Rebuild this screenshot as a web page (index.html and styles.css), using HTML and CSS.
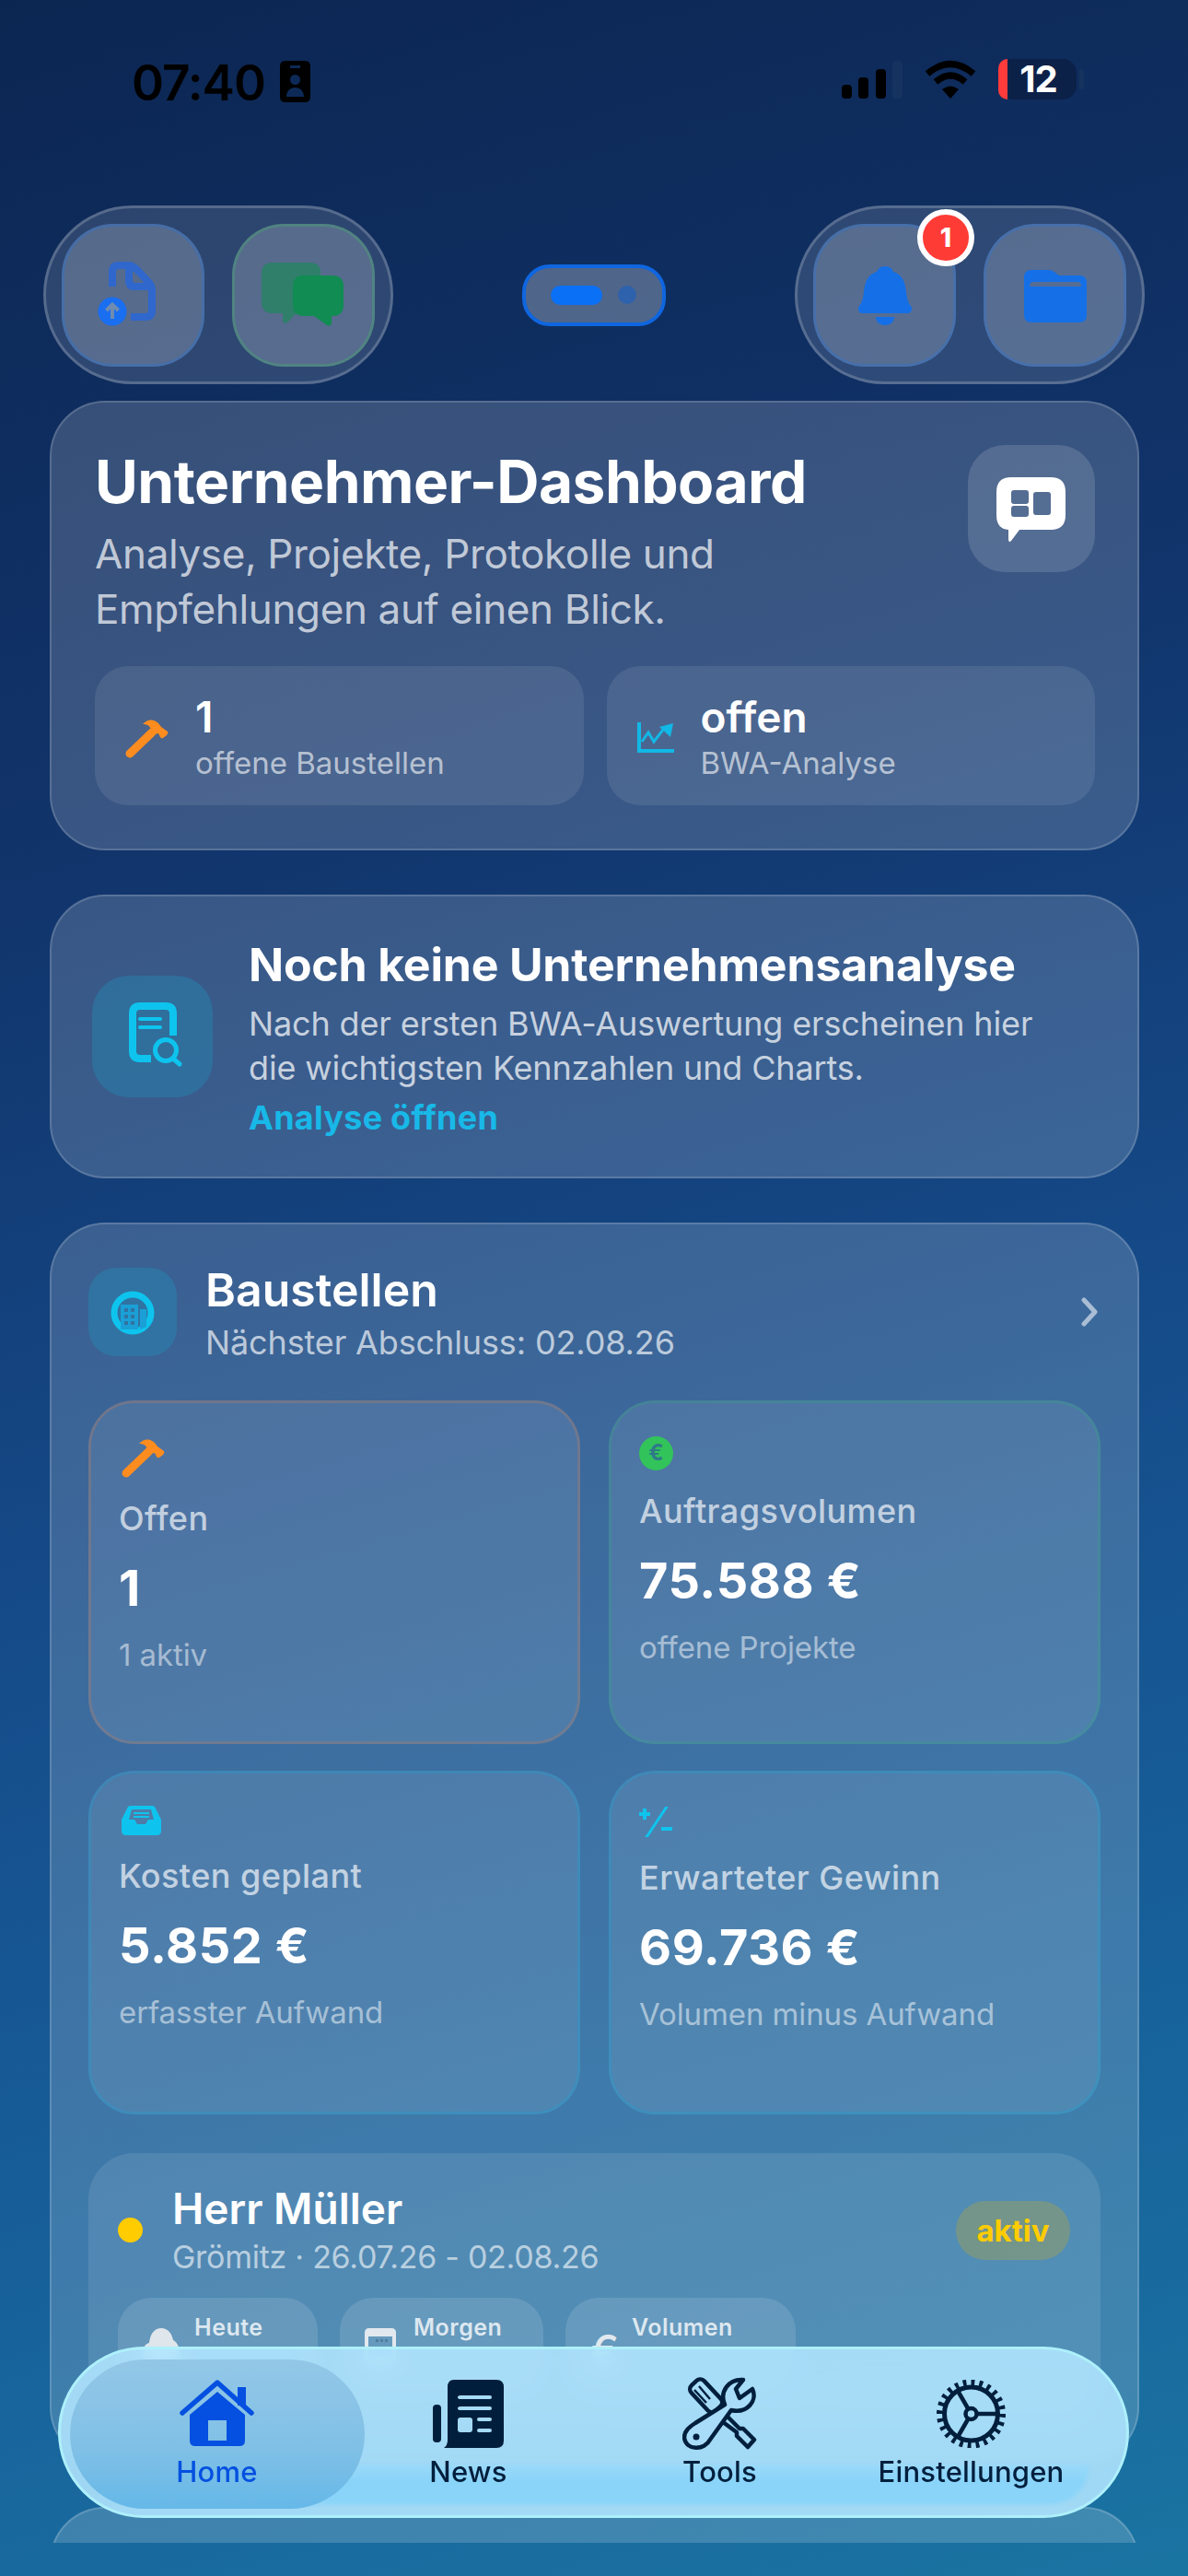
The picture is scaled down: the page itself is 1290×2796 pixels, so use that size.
FILE: index.html
```html
<!DOCTYPE html>
<html lang="de">
<head>
<meta charset="utf-8">
<title>Unternehmer-Dashboard</title>
<link rel="stylesheet" href="styles.css">
</head>
<body>
<div class="screen">
  <header class="status">
    <div class="status-left">
      <span class="time">07:40</span>
      <svg class="contact" viewBox="0 0 33 45"><path fill-rule="evenodd" d="M6 0H27Q33 0 33 6V39Q33 45 27 45H6Q0 45 0 39V6Q0 0 6 0ZM11 5V8H22V5ZM16.500 15A5.500 5.500 0 1 0 16.500 26A5.500 5.500 0 1 0 16.500 15ZM7 39H26C26 33 22 29 16.500 29S7 33 7 39Z"/></svg>
    </div>
    <div class="status-right">
      <div class="signal"><i class="bar b1"></i><i class="bar b2"></i><i class="bar b3"></i><i class="bar b4"></i></div>
      <svg class="wifi" viewBox="0 0 58 42"><path d="M4 15Q29 -6 54 15M13 24Q29 10 45 24" fill="none" stroke="#000" stroke-width="7"/><path d="M20 32Q29 25 38 32L29 42Z"/></svg>
      <div class="battery"><span class="battery-low"></span><span class="battery-num">12</span></div>
      <span class="battery-nub"></span>
    </div>
  </header>

  <nav class="topbar">
    <div class="capsule">
      <button class="round blue">
        <svg viewBox="0 0 155 155"><path d="M55 68V52Q55 45 62 45H72Q77 45 81 49L94 63Q98 67 98 72V94Q98 101 91 101H75M73 47V62Q73 68 79 68H96" fill="none" stroke="#2f67cc" stroke-width="8"/><circle cx="55" cy="95" r="15.500" fill="#1a6ef0"/><path d="M55 103V89M48.500 94L55 87.500L61.500 94" fill="none" stroke="#6f8cb0" stroke-width="4"/></svg>
      </button>
      <button class="round green">
        <svg viewBox="0 0 155 155"><path d="M44 42H84Q96 42 96 52V60H76Q66 60 66 70V88Q66 94 70 97L60 107Q55 110 55 103V97H44Q32 97 32 85V54Q32 42 44 42Z" fill="#2f7f6b"/><path d="M78 56H109Q121 56 121 68V88Q121 100 109 100H108V107Q108 112 103 110L89 100H78Q66 100 66 88V68Q66 56 78 56Z" fill="#118c52"/></svg>
      </button>
    </div>
    <div class="toggle"><span class="toggle-pill"></span><span class="toggle-dot"></span></div>
    <div class="capsule">
      <button class="round blue">
        <svg viewBox="0 0 155 155" fill="#1570e8"><path d="M78 46c5 0 8 3 9 6c9 3 13 10 14 22c1 9 3 13 5 15c2 2 1 8-3 8H53c-4 0-5-6-3-8c2-2 4-6 5-15c1-12 5-19 14-22c1-3 4-6 9-6z"/><path d="M68 101H88c0 5-4 9-10 9s-10-4-10-9z"/></svg>
      </button>
      <span class="badge">1</span>
      <button class="round blue">
        <svg viewBox="0 0 155 155" fill="#1570e8"><path fill-rule="evenodd" d="M52 50H70Q75 50 78 53L82 56H104Q112 56 112 64V99Q112 107 104 107H52Q44 107 44 99V58Q44 50 52 50ZM54 63Q50 63 50 68H106Q106 63 102 63Z"/></svg>
      </button>
    </div>
  </nav>

  <main class="content">
    <section class="card hero">
      <div class="hero-top">
        <div class="hero-text">
          <h1 class="hero-title">Unternehmer-Dashboard</h1>
          <p class="hero-sub">Analyse, Projekte, Protokolle und<br>Empfehlungen auf einen Blick.</p>
        </div>
        <div class="hero-icon">
          <svg viewBox="0 0 138 138"><path fill="#fff" fill-rule="evenodd" d="M47 35H90Q106 35 106 51V76Q106 92 90 92H56L47 104Q44 107 44 102V92Q31 91 31 76V51Q31 35 47 35ZM50 49Q47 49 47 52V61Q47 64 50 64H63Q66 64 66 61V52Q66 49 63 49ZM50 66Q47 66 47 69V75Q47 78 50 78H63Q66 78 66 75V69Q66 66 63 66ZM74 51Q71 51 71 54V73Q71 76 74 76H87Q90 76 90 73V54Q90 51 87 51Z"/></svg>
        </div>
      </div>
      <div class="stat-row">
        <div class="stat">
          <svg class="ic-hammer" viewBox="0 0 47 43"><path d="M5 38L29 15" stroke="#ff8c1e" stroke-width="9" stroke-linecap="round"/><path fill="#ff8c1e" d="M19 6C24 0 33 -1 39 9L46 14Q47 16 45 18L41 21Q39 22 38 20L36 16L32 17L27 12C28 9 25 6 19 6Z"/></svg>
          <div class="stat-text"><strong class="stat-value">1</strong><span class="stat-label">offene Baustellen</span></div>
        </div>
        <div class="stat">
          <svg class="ic-chart" viewBox="0 0 40 34"><path d="M2 0V31H40" fill="none" stroke="#12b8e6" stroke-width="4"/><path d="M5 21L12 11L18 21L28 8" fill="none" stroke="#12b8e6" stroke-width="3"/><path d="M24 5L39 1L36 16Z" fill="#12b8e6"/></svg>
          <div class="stat-text"><strong class="stat-value">offen</strong><span class="stat-label">BWA-Analyse</span></div>
        </div>
      </div>
    </section>

    <section class="card empty">
      <div class="empty-icon">
        <svg viewBox="0 0 131 132"><path d="M64 90H52Q44 90 44 82V41Q44 33 52 33H80Q88 33 88 41V65" fill="none" stroke="#0ec4ee" stroke-width="8" stroke-linejoin="round"/><path d="M52 47H74M52 56H74" stroke="#0ec4ee" stroke-width="4" stroke-linecap="round"/><circle cx="80" cy="81" r="11.500" fill="none" stroke="#0ec4ee" stroke-width="5"/><path d="M88 90L95 96" stroke="#0ec4ee" stroke-width="5" stroke-linecap="round"/></svg>
      </div>
      <div class="empty-text">
        <h2 class="empty-title">Noch keine Unternehmensanalyse</h2>
        <p class="empty-body">Nach der ersten BWA-Auswertung erscheinen hier<br>die wichtigsten Kennzahlen und Charts.</p>
        <a class="empty-link">Analyse öffnen</a>
      </div>
    </section>

    <section class="card sites">
      <div class="sites-head">
        <div class="sites-icon">
          <svg viewBox="0 0 96 96"><circle cx="48" cy="49" r="20" fill="none" stroke="#0ec4ee" stroke-width="7"/><path fill="#1a9fd6" fill-rule="evenodd" d="M35 40H54V67H35ZM39 44V48H43V44ZM46 44V48H50V44ZM39 51V55H43V51ZM46 51V55H50V51ZM39 58V62H43V58ZM46 58V62H50V58Z"/><path fill="#1a9fd6" d="M56 45H63V64L56 67Z"/></svg>
        </div>
        <div class="sites-titles">
          <h2 class="sites-title">Baustellen</h2>
          <p class="sites-sub">Nächster Abschluss: 02.08.26</p>
        </div>
        <svg class="chevron" viewBox="0 0 18 32"><path d="M3 3L15 16L3 29" fill="none" stroke="#a9bdd4" stroke-width="5" stroke-linecap="round" stroke-linejoin="round"/></svg>
      </div>

      <div class="tiles">
        <div class="tile tile-orange">
          <svg class="tile-hammer" viewBox="0 0 47 43"><path d="M5 38L29 15" stroke="#ff8c1e" stroke-width="9" stroke-linecap="round"/><path fill="#ff8c1e" d="M19 6C24 0 33 -1 39 9L46 14Q47 16 45 18L41 21Q39 22 38 20L36 16L32 17L27 12C28 9 25 6 19 6Z"/></svg>
          <div class="tile-label">Offen</div>
          <div class="tile-value">1</div>
          <div class="tile-sub">1 aktiv</div>
        </div>
        <div class="tile tile-green">
          <svg class="tile-euro" viewBox="0 0 37 37"><circle cx="18.500" cy="18.500" r="18.500" fill="#32c45a"/><text class="euro-glyph" x="18.500" y="26">€</text></svg>
          <div class="tile-label">Auftragsvolumen</div>
          <div class="tile-value">75.588 €</div>
          <div class="tile-sub">offene Projekte</div>
        </div>
        <div class="tile tile-cyan">
          <svg class="tile-tray" viewBox="0 0 43 32"><path fill="#0ec4ee" fill-rule="evenodd" d="M10 0H33Q36 0 37 3L43 15V27Q43 32 38 32H5Q0 32 0 27V15L6 3Q7 0 10 0ZM11 4L8 15H14L17 20H26L29 15H35L32 4ZM13 7H30V9H13ZM13 11H30V13H13Z"/></svg>
          <div class="tile-label">Kosten geplant</div>
          <div class="tile-value">5.852 €</div>
          <div class="tile-sub">erfasster Aufwand</div>
        </div>
        <div class="tile tile-cyan">
          <svg class="tile-pm" viewBox="0 0 36 33"><path d="M0 8H12M6 2V14M24 24H36" stroke="#0ec4ee" stroke-width="4"/><path d="M30 0L8 33" stroke="#0ec4ee" stroke-width="3" stroke-linecap="round"/></svg>
          <div class="tile-label">Erwarteter Gewinn</div>
          <div class="tile-value">69.736 €</div>
          <div class="tile-sub">Volumen minus Aufwand</div>
        </div>
      </div>

      <article class="job">
        <div class="job-head">
          <span class="job-dot"></span>
          <div class="job-titles">
            <h3 class="job-title">Herr Müller</h3>
            <p class="job-sub">Grömitz · 26.07.26 - 02.08.26</p>
          </div>
          <span class="job-pill">aktiv</span>
        </div>
        <div class="chips">
          <div class="chip chip-a">
            <svg class="chip-cloud" viewBox="0 0 40 40"><path fill="#dfe6ec" d="M9 40C2 40 0 33 0 27C0 21 3 17 7 16C8 6 13 0 20 0C28 0 32 7 33 13C37 15 40 20 40 27C40 34 36 40 30 40Z"/></svg>
            <span class="chip-label">Heute</span>
          </div>
          <div class="chip chip-b">
            <svg class="chip-cal" viewBox="0 0 34 40"><path fill="#e2e8ee" fill-rule="evenodd" d="M5 0H29Q34 0 34 5V35Q34 40 29 40H5Q0 40 0 35V5Q0 0 5 0ZM4 9V32H30V9Z"/><path fill="#4f7ea0" d="M12 12H15V15H12ZM17 12H20V15H17ZM22 12H25V15H22Z"/></svg>
            <span class="chip-label">Morgen</span>
          </div>
          <div class="chip chip-c">
            <span class="chip-euro">€</span>
            <span class="chip-label">Volumen</span>
          </div>
        </div>
      </article>
    </section>

    <section class="card next"></section>
  </main>

  <nav class="tabbar">
    <a class="tab tab-active">
      <svg class="tab-home" viewBox="0 0 81 72"><path d="M3 36L41 3L78 36" fill="none" stroke="#0550e0" stroke-width="5.500" stroke-linecap="round" stroke-linejoin="round"/><path d="M63 8H72V28H63Z" fill="#0550e0"/><path fill="#0550e0" fill-rule="evenodd" d="M41 13L71 38V66Q71 72 65 72H17Q11 72 11 66V38ZM31 44V66H51V44Z"/></svg>
      <span class="tab-label">Home</span>
    </a>
    <a class="tab">
      <svg class="tab-news" viewBox="0 0 77 74"><path fill="#011f3d" fill-rule="evenodd" d="M23 0H69Q77 0 77 8V66Q77 74 69 74H12Q16 71 16 66V8Q16 0 23 0ZM30 17Q27 17 27 19T30 21H62Q64 21 64 19T62 17ZM30 29Q27 29 27 31T30 33H62Q64 33 64 31T62 29ZM30 41Q27 41 27 44V54Q27 57 30 57H40Q43 57 43 54V44Q43 41 40 41ZM50 41Q48 41 48 43T50 45H62Q64 45 64 43T62 41ZM50 53Q48 53 48 55T50 57H62Q64 57 64 55T62 53Z"/><rect x="0" y="27" width="9" height="41" rx="4" fill="#011f3d"/></svg>
      <span class="tab-label">News</span>
    </a>
    <a class="tab">
      <svg class="tab-tools" viewBox="0 0 81 79" fill="none" stroke="#011f3d" stroke-width="4.500" stroke-linejoin="round"><rect x="7" y="11" width="38" height="19" rx="6" transform="rotate(47 26 20)"/><path d="M13 14L26 28M18 10L30 24" stroke-width="2.500"/><path d="M46 40L62 56L66 56L78 68L71 76L59 64L59 60L40 46"/><path fill="#a8dcf8" d="M46 30C40 16 50 2 66 3L58 13L62 23L76 13C82 26 70 40 53 36L30 68C24 80 4 80 2 66C2 58 8 54 14 50Z"/><circle cx="15" cy="65" r="3.500" fill="#011f3d" stroke="none"/></svg>
      <span class="tab-label">Tools</span>
    </a>
    <a class="tab">
      <svg class="tab-gear" viewBox="0 0 76 74" fill="none" stroke="#011f3d"><circle cx="37.500" cy="37" r="34" stroke-width="7" stroke-dasharray="3.800 5.100" pathLength="213.600"/><circle cx="37.500" cy="37" r="29" stroke-width="5"/><circle cx="37.500" cy="37" r="6" stroke-width="4.500"/><path d="M44 37H66M34 31L23 12M34 43L23 62" stroke-width="4.500"/></svg>
      <span class="tab-label">Einstellungen</span>
    </a>
  </nav>
</div>
</body>
</html>
```

FILE: styles.css
```css
* { box-sizing: border-box; }
html, body { margin: 0; padding: 0; }
body { font-family: Inter, "Liberation Sans", sans-serif; color: #fff; }
h1, h2, h3, p { margin: 0; }
svg { display: block; flex: none; }

.screen {
  position: relative;
  width: 1290px;
  height: 2796px;
  overflow: hidden;
  background: linear-gradient(164deg, #0c2652 0%, #11346b 30%, #154a88 55%, #17609a 78%, #1a74a2 100%);
}

/* status bar */
.status {
  display: flex;
  justify-content: space-between;
  height: 223px;
  padding: 61px 113px 0 143px;
}
.status-left { display: flex; align-items: flex-start; gap: 16px; }
.time { font-size: 53px; line-height: 58px; font-weight: 600; color: #000; letter-spacing: -1px; }
.contact { width: 33px; height: 45px; margin-top: 5px; fill: #000; }
.status-right { display: flex; align-items: flex-start; padding-top: 3px; }
.signal { display: flex; align-items: flex-end; gap: 7.500px; height: 43px; }
.bar { display: block; width: 11px; border-radius: 4px; background: #000; }
.b1 { height: 15px; }
.b2 { height: 23px; }
.b3 { height: 32px; }
.b4 { height: 41px; background: #16335f; }
.wifi { width: 58px; height: 42px; margin: 1px 23px 0 23px; }
.battery {
  position: relative;
  width: 85px;
  height: 44px;
  border-radius: 15px;
  background: #0c2148;
  text-align: center;
}
.battery-low { position: absolute; left: 0; top: 0; bottom: 0; width: 10px; border-radius: 15px 0 0 15px; background: #ff3b3b; }
.battery-num { font-size: 40px; line-height: 44px; font-weight: 700; letter-spacing: -1px; margin-left: 2px; }
.battery-nub { width: 5px; height: 22px; margin: 11px 0 0 3px; border-radius: 0 4px 4px 0; background: #16335f; }

/* top controls */
.topbar {
  display: flex;
  justify-content: space-between;
  align-items: center;
  height: 194px;
  padding: 0 47px;
}
.capsule {
  position: relative;
  display: flex;
  align-items: center;
  justify-content: space-between;
  width: 380px;
  height: 194px;
  padding: 0 17px;
  border: 3px solid rgba(255, 255, 255, 0.2);
  border-radius: 97px;
  background: rgba(255, 255, 255, 0.13);
}
.round {
  width: 155px;
  height: 155px;
  padding: 0;
  border-radius: 56px;
  border: 3px solid;
  background: rgba(255, 255, 255, 0.2);
}
.round svg { width: 155px; height: 155px; margin: -3px; }
.blue { border-color: rgba(45, 115, 210, 0.38); }
.green { border-color: rgba(70, 170, 110, 0.38); }
.toggle {
  display: flex;
  align-items: center;
  gap: 17px;
  width: 156px;
  height: 67px;
  padding-left: 27px;
  border: 4px solid #0f66e0;
  border-radius: 30px;
  background: rgba(255, 255, 255, 0.27);
}
.toggle-pill { width: 56px; height: 21px; border-radius: 11px; background: #0a70f5; }
.toggle-dot { width: 20px; height: 20px; border-radius: 50%; background: #2f62ad; }
.badge {
  position: absolute;
  left: 130px;
  top: 1px;
  width: 62px;
  height: 62px;
  border: 6px solid #fff;
  border-radius: 50%;
  background: #ff3b36;
  text-align: center;
  font-size: 28px;
  line-height: 50px;
  font-weight: 800;
}

/* content */
.content {
  display: flex;
  flex-direction: column;
  gap: 48px;
  height: 2325px;
  margin-top: 18px;
  padding: 0 53px 0 54px;
  overflow: hidden;
}
.card {
  flex: none;
  border: 2px solid rgba(255, 255, 255, 0.16);
  border-radius: 60px;
  background: rgba(255, 255, 255, 0.17);
}

/* hero */
.hero { height: 488px; padding: 46px 46px 0 47px; }
.hero-top { display: flex; justify-content: space-between; }
.hero-title { margin-top: 2px; font-size: 64px; line-height: 76px; font-weight: 700; letter-spacing: -0.5px; }
.hero-sub { margin-top: 10px; font-size: 44px; line-height: 60px; letter-spacing: -0.36px; color: rgba(255, 255, 255, 0.7); }
.hero-icon { width: 138px; height: 138px; border-radius: 40px; background: rgba(255, 255, 255, 0.14); }
.stat-row { display: grid; grid-template-columns: 1fr 1fr; gap: 25px; margin-top: 32px; }
.stat {
  display: flex;
  align-items: center;
  gap: 29px;
  height: 151px;
  padding: 0 0 0 33px;
  border-radius: 36px;
  background: rgba(255, 255, 255, 0.09);
}
.ic-hammer { width: 47px; height: 43px; margin-top: 5px; }
.ic-chart { width: 40px; height: 34px; margin-top: 5px; }
.stat-text { display: flex; flex-direction: column; padding-top: 1px; }
.stat-value { font-size: 46px; line-height: 54px; font-weight: 600; }
.stat-label { margin-top: 3px; font-size: 33px; line-height: 40px; color: rgba(255, 255, 255, 0.62); }

/* empty */
.empty { display: flex; align-items: center; gap: 39px; height: 308px; padding-left: 44px; }
.empty-icon { width: 131px; height: 132px; flex: none; border-radius: 40px; background: rgba(26, 160, 200, 0.28); }
.empty-icon svg { width: 131px; height: 132px; }
.empty-text { padding-top: 4px; }
.empty-title { font-size: 50px; line-height: 60px; font-weight: 700; letter-spacing: -0.2px; }
.empty-body { margin-top: 10px; font-size: 36px; line-height: 48px; letter-spacing: -0.15px; color: rgba(255, 255, 255, 0.72); }
.empty-link { display: block; margin-top: 6px; font-size: 36px; line-height: 48px; font-weight: 700; letter-spacing: 0.25px; color: #18b8e8; }

/* sites */
.sites { height: 1346px; padding: 47px 40px 0 40px; }
.sites-head { display: flex; align-items: center; height: 95px; }
.sites-icon { width: 96px; height: 96px; flex: none; border-radius: 30px; background: rgba(26, 160, 200, 0.28); }
.sites-titles { margin-left: 31px; padding-top: 2px; }
.sites-title { font-size: 50px; line-height: 60px; font-weight: 600; }
.sites-sub { margin-top: 5px; font-size: 36px; line-height: 44px; letter-spacing: -0.13px; color: rgba(255, 255, 255, 0.66); }
.chevron { width: 18px; height: 32px; margin-left: auto; margin-right: 3px; }
.tiles { display: grid; grid-template-columns: 534px 534px; gap: 29px 31px; margin-top: 49px; }
.tile {
  height: 373px;
  padding: 35px 0 0 30px;
  border: 3px solid;
  border-radius: 50px;
  background: rgba(255, 255, 255, 0.09);
}
.tile-orange { border-color: rgba(165, 125, 110, 0.4); }
.tile-green { border-color: rgba(50, 170, 125, 0.28); }
.tile-cyan { border-color: rgba(25, 165, 215, 0.28); }
.tile-hammer { width: 47px; height: 43px; margin: 3px 0 0 3px; }
.tile-euro { width: 37px; height: 37px; margin-top: 1px; }
.euro-glyph { font-size: 24px; font-weight: 700; fill: #2f7a88; text-anchor: middle; }
.tile-tray { width: 43px; height: 32px; margin-left: 3px; }
.tile-pm { width: 36px; height: 33px; margin-top: 1px; }
.tile-label { margin-top: 22px; font-size: 36px; line-height: 44px; font-weight: 500; letter-spacing: 0.45px; color: rgba(255, 255, 255, 0.68); }
.tile-value { margin-top: 24px; font-size: 54px; line-height: 60px; font-weight: 700; letter-spacing: 0.6px; }
.tile-sub { margin-top: 22px; font-size: 33px; line-height: 40px; letter-spacing: -0.1px; color: rgba(255, 255, 255, 0.5); }

/* job */
.job {
  height: 292px;
  margin-top: 42px;
  padding: 32px 33px 0 32px;
  border-radius: 50px;
  background: rgba(255, 255, 255, 0.1);
}
.job-head { display: flex; align-items: center; }
.job-dot { width: 27px; height: 27px; border-radius: 50%; background: #ffcc00; }
.job-titles { margin-left: 32px; }
.job-title { font-size: 46px; line-height: 56px; font-weight: 600; }
.job-sub { margin-top: 3px; font-size: 34px; line-height: 44px; letter-spacing: -0.27px; color: rgba(255, 255, 255, 0.6); }
.job-pill {
  margin-left: auto;
  width: 124px;
  height: 64px;
  border-radius: 32px;
  background: rgba(200, 170, 40, 0.3);
  text-align: center;
  font-size: 33px;
  line-height: 64px;
  font-weight: 700;
  color: #ffcc00;
}
.chips { display: flex; gap: 24px; margin-top: 22px; }
.chip {
  display: flex;
  align-items: center;
  gap: 18px;
  height: 105px;
  padding-left: 27px;
  border-radius: 36px;
  background: rgba(255, 255, 255, 0.12);
}
.chip-a { width: 217px; gap: 16px; }
.chip-b { width: 221px; gap: 19px; }
.chip-c { width: 250px; gap: 20px; }
.chip-cloud { width: 40px; height: 40px; }
.chip-cal { width: 34px; height: 40px; }
.chip-euro { width: 25px; font-size: 46px; line-height: 46px; font-weight: 500; color: #e2e8ee; margin-top: 8px; }
.chip-label { align-self: flex-start; margin-top: 17px; font-size: 25px; line-height: 30px; font-weight: 600; letter-spacing: 0.5px; color: rgba(255, 255, 255, 0.78); }

.next { height: 200px; }

/* tab bar */
.tabbar {
  position: absolute;
  left: 63px;
  top: 2547px;
  display: grid;
  grid-template-columns: repeat(4, 273px);
  width: 1163px;
  height: 186px;
  padding: 30px 0 0 33px;
  border: 3px solid #aef0fb;
  border-radius: 93px;
  background: rgba(178, 230, 255, 0.88);
  backdrop-filter: blur(10px);
  overflow: hidden;
}
.tabbar::after {
  content: "";
  position: absolute;
  left: 40px;
  right: 40px;
  top: 125px;
  bottom: 12px;
  border-radius: 0 0 60px 60px;
  background: linear-gradient(180deg, #9ad9f9 0%, #8ad4f9 40%, #8ad4f9 100%);
  filter: blur(2px);
}
.tab {
  position: relative;
  z-index: 1;
  display: flex;
  flex-direction: column;
  align-items: center;
  height: 130px;
  color: #011f3d;
}
.tab-active { color: #0550e0; }
.tab-active::before {
  content: "";
  position: absolute;
  left: -23px;
  top: -19px;
  width: 320px;
  height: 162px;
  z-index: -1;
  border-radius: 81px;
  background: linear-gradient(180deg, #93c7e7 0%, #80c0e6 60%, #65b8e8 100%);
}
.tab svg { margin-top: 3px; }
.tab-home { width: 81px; height: 72px; }
.tab-news { width: 77px; height: 74px; }
.tab-tools { width: 81px; height: 79px; }
.tab-gear { width: 76px; height: 74px; }
.tab .tab-tools { margin-top: 0; }
.tab-label { position: absolute; top: 83px; font-size: 31px; line-height: 40px; font-weight: 500; letter-spacing: 0.2px; white-space: nowrap; }
```
